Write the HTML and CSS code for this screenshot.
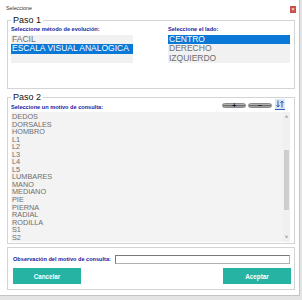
FILE: index.html
```html
<!DOCTYPE html>
<html>
<head>
<meta charset="utf-8">
<link rel="stylesheet" href="styles.css">
</head>
<body>
<div class="window">
  <div class="titlebar">
    <span class="title">Seleccione</span>
    <span class="close">×</span>
  </div>
  <fieldset class="group g1">
    <legend>Paso 1</legend>
    <div class="cols">
      <div class="col">
        <div class="lbl">Seleccione método de evolución:</div>
        <ul class="list big">
          <li>FACIL</li>
          <li class="sel">ESCALA VISUAL ANALOGICA</li>
        </ul>
      </div>
      <div class="col">
        <div class="lbl">Seleccione el lado:</div>
        <ul class="list big">
          <li class="sel">CENTRO</li>
          <li>DERECHO</li>
          <li>IZQUIERDO</li>
        </ul>
      </div>
    </div>
  </fieldset>
  <fieldset class="group g2">
    <legend>Paso 2</legend>
    <div class="head">
      <span class="lbl">Seleccione un motivo de consulta:</span>
      <div class="tools">
        <span class="pill">+</span>
        <span class="pill">−</span>
        <span class="sort">
          <svg width="10" height="10" viewBox="0 0 10 10">
            <path d="M3 1.5V7.5M1.5 6L3 8L4.5 6" fill="none" stroke="#2a5cb0" stroke-width="1"/>
            <path d="M7 8.5V2.5M5.5 4L7 2L8.5 4" fill="none" stroke="#2a5cb0" stroke-width="1"/>
          </svg>
        </span>
      </div>
    </div>
    <div class="list2">
      <ul class="items">
        <li>DEDOS</li>
        <li>DORSALES</li>
        <li>HOMBRO</li>
        <li>L1</li>
        <li>L2</li>
        <li>L3</li>
        <li>L4</li>
        <li>L5</li>
        <li>LUMBARES</li>
        <li>MANO</li>
        <li>MEDIANO</li>
        <li>PIE</li>
        <li>PIERNA</li>
        <li>RADIAL</li>
        <li>RODILLA</li>
        <li>S1</li>
        <li>S2</li>
      </ul>
      <div class="sb">
        <span class="arr">&#x2C4;</span>
        <div class="track"><div class="thumb"></div></div>
        <span class="arr">&#x2C5;</span>
      </div>
    </div>
  </fieldset>
  <fieldset class="group g3">
    <div class="obs">
      <span class="lbl">Observación del motivo de consulta:</span>
      <input class="txt" type="text">
    </div>
    <div class="btns">
      <button class="btn">Cancelar</button>
      <button class="btn">Aceptar</button>
    </div>
  </fieldset>
</div>
</body>
</html>
```

FILE: styles.css
```css
html, body {
  margin: 0;
  padding: 0;
}
body {
  background: #e4e4e4;
  font-family: "Liberation Sans", Arial, sans-serif;
  width: 302px;
  height: 300px;
}
.window {
  width: 300px;
  height: 296px;
  background: #fff;
  border-right: 1px solid #c4c4c4;
  border-bottom: 1px solid #c4c4c4;
  box-sizing: border-box;
  overflow: hidden;
}
.titlebar {
  height: 17px;
  display: flex;
  justify-content: space-between;
  align-items: flex-start;
  padding: 5px 3px 0 6px;
  box-sizing: border-box;
}
.title {
  font-size: 5.3px;
  line-height: 6px;
  color: #333;
}
.close {
  width: 6px;
  height: 7px;
  margin-top: 1px;
  background: #c9504b;
  color: #fff;
  font-size: 6px;
  line-height: 7px;
  text-align: center;
}
.group {
  margin: 0 0 0 7px;
  width: 288px;
  box-sizing: border-box;
  border: 1px solid #d4d4d4;
  padding: 0 4px 0 3px;
  min-width: 0;
}
legend {
  padding: 0 2px;
  font-size: 9px;
  line-height: 6px;
  color: #111;
}
.lbl {
  font-size: 5.6px;
  font-weight: bold;
  line-height: 7px;
  color: #20209a;
  white-space: nowrap;
}
.g1 {
  padding-top: 3px;
  padding-bottom: 25px;
}
.cols {
  display: grid;
  grid-template-columns: 122px 122px;
  justify-content: space-between;
}
.col .lbl {
  margin-bottom: 2px;
}
ul {
  list-style: none;
  margin: 0;
  padding: 0;
}
.list {
  background: #f1f1f1;
  height: 28px;
}
.list li {
  font-size: 8.5px;
  line-height: 9.3px;
  height: 9.3px;
  padding-left: 1px;
  color: #6e6e6e;
  white-space: nowrap;
}
.list li.sel {
  background: #0a78d7;
  color: #fff;
}
.g2 {
  margin-top: 5px;
  padding-bottom: 1px;
}
.head {
  height: 12px;
  margin-top: -1px;
  display: flex;
  justify-content: space-between;
  align-items: flex-start;
}
.head .lbl {
  margin-top: 4.5px;
}
.tools {
  display: flex;
  align-items: flex-start;
  margin-right: 5px;
}
.pill {
  width: 24px;
  height: 5px;
  margin-top: 3.5px;
  margin-left: 1.3px;
  box-sizing: border-box;
  border: 1px solid #8a8a8a;
  border-radius: 3px;
  background: linear-gradient(to bottom, #d6d6d6, #6c6c6c 50%, #b4b4b4);
  color: #111;
  font-size: 7px;
  font-weight: bold;
  line-height: 3px;
  text-align: center;
}
.sort {
  width: 10px;
  height: 10px;
  margin-left: 3.3px;
  background: #d9e6f6;
  border-bottom: 1px solid #2d62b8;
  display: flex;
}
.list2 {
  margin-top: 1px;
  height: 130px;
  background: #f3f3f3;
  display: flex;
}
.items {
  flex: 1;
  padding-top: 1px;
}
.items li {
  font-size: 7.3px;
  line-height: 7.56px;
  height: 7.56px;
  padding-left: 1px;
  color: #6e6e6e;
}
.sb {
  width: 7px;
  display: flex;
  flex-direction: column;
  align-items: center;
  background: #f0f0f0;
}
.arr {
  height: 10px;
  font-size: 6px;
  line-height: 10px;
  color: #606060;
}
.track {
  flex: 1;
  width: 100%;
  display: flex;
  justify-content: center;
}
.thumb {
  width: 5.5px;
  height: 60px;
  margin-top: 28px;
  background: #cdcdcd;
}
.g3 {
  margin-top: 3px;
  padding: 7px 3px 5px 5px;
}
.obs {
  display: flex;
  align-items: center;
  justify-content: space-between;
  height: 9px;
}
.txt {
  width: 175px;
  height: 9px;
  margin: 0 1px 0 0;
  padding: 0;
  box-sizing: border-box;
  border: 1px solid #b0b0b0;
  border-top-color: #7a7a7a;
  border-left-color: #7a7a7a;
  background: #fff;
}
.btns {
  margin-top: 4px;
  display: flex;
  justify-content: space-between;
}
.btn {
  width: 68px;
  height: 16px;
  margin: 0;
  padding: 0;
  border: none;
  background: #27b3a4;
  color: #fff;
  font-family: "Liberation Sans", Arial, sans-serif;
  font-size: 6.3px;
  font-weight: bold;
}
```
